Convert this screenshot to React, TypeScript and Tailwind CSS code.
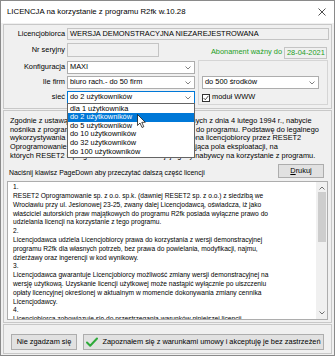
import React from 'react';

const Combo = ({ value, className = '', focused = false }: { value: string; className?: string; focused?: boolean }) => (
  <div
    className={`h-[13px] flex items-center bg-white border ${focused ? 'border-[#0078d7]' : 'border-[#adadad]'} ${className}`}
  >
    <span className="flex-1 pl-[2px] whitespace-nowrap overflow-hidden">{value}</span>
    <svg width="6" height="4" viewBox="0 0 6 4" className="mr-[3px]">
      <path d="M0.5 0.5 L3 3 L5.5 0.5" stroke="#606060" strokeWidth="0.8" fill="none" />
    </svg>
  </div>
);

const netOptions = [
  'dla 1 użytkownika',
  'do 2 użytkowników',
  'do 5 użytkowników',
  'do 10 użytkowników',
  'do 32 użytkowników',
  'do 100 użytkowników',
];

const introLines = [
  'Zgodnie z ustawą o prawie autorskim i prawach pokrewnych z dnia 4 lutego 1994 r., nabycie',
  'nośnika z programem nie jest nabyciem praw autorskich do programu. Podstawę do legalnego',
  'wykorzystywania programu stanowi tylko licencja udzielona licencjobiorcy przez RESET2',
  'Oprogramowanie sp. z o.o. w formie dokumentu, określająca pola eksploatacji, na',
  'których RESET2 Oprogramowanie udziela swojej zgody nabywcy na korzystanie z programu.',
];

const licenseLines = [
  '1.',
  'RESET2 Oprogramowanie sp. z o.o. sp.k. (dawniej RESET2 sp. z o.o.) z siedzibą we',
  'Wrocławiu przy ul. Jesionowej 23-25, zwany dalej Licencjodawcą, oświadcza, iż jako',
  'właściciel autorskich praw majątkowych do programu R2fk posiada wyłączne prawo do',
  'udzielania licencji na korzystanie z tego programu.',
  '2.',
  'Licencjodawca udziela Licencjobiorcy prawa do korzystania z wersji demonstracyjnej',
  'programu R2fk dla własnych potrzeb, bez prawa do powielania, modyfikacji, najmu,',
  'dzierżawy oraz ingerencji w kod wynikowy.',
  '3.',
  'Licencjodawca gwarantuje Licencjobiorcy możliwość zmiany wersji demonstracyjnej na',
  'wersję użytkową. Uzyskanie licencji użytkowej może nastąpić wyłącznie po uiszczeniu',
  'opłaty licencyjnej określonej w aktualnym w momencie dokonywania zmiany cennika',
  'Licencjodawcy.',
  '4.',
  'Licencjobiorca zobowiązuje się do przestrzegania warunków niniejszej licencji.',
];

export default function App() {
  return (
    <div className="w-[335px] h-[356px] bg-[#f0f0f0] border border-[#8a8a8a] flex flex-col text-black text-[7.4px] leading-[8.67px] font-['Liberation_Sans',Tahoma,sans-serif] overflow-hidden">
      {/* title bar */}
      <div className="h-[22px] bg-white flex items-center pl-[6px] pr-[8px] shrink-0">
        <span className="flex-1 text-[7.8px] whitespace-nowrap">
          LICENCJA na korzystanie z programu R2fk w.10.28
        </span>
        <svg width="8" height="8" viewBox="0 0 8 8">
          <path d="M0.5 0.5 L7.5 7.5 M7.5 0.5 L0.5 7.5" stroke="#222" strokeWidth="0.8" />
        </svg>
      </div>

      {/* top panel */}
      <div className="relative mx-[2px] mt-[1px] border border-[#c8c8c8] pt-[3px] pb-[3px] pr-[2px] flex flex-col gap-[3px] shrink-0">
        <div className="flex items-center h-[12px]">
          <span className="w-[63px] text-right pr-[2px]">Licencjobiorca</span>
          <div className="flex-1 h-[12px] bg-[#f0f0f0] border border-[#c4c4c4] flex items-center pl-[2px] whitespace-nowrap">
            WERSJA DEMONSTRACYJNA NIEZAREJESTROWANA
          </div>
        </div>
        <div className="flex items-center h-[14px]">
          <span className="w-[63px] text-right pr-[2px]">Nr seryjny</span>
          <div className="w-[92px] h-[14px] bg-[#f0f0f0] border border-[#c4c4c4]" />
          <span className="flex-1 text-right pr-[2px] text-[#1e9e1e] mt-[4px]">Abonament ważny do</span>
          <div className="w-[43px] h-[12px] mt-[6px] mr-[2px] bg-[#f0f0f0] border border-[#c4c4c4] flex items-center pl-[2px] text-[#1e9e1e]">
            28-04-2021
          </div>
        </div>
        <div className="flex">
          <div className="flex flex-col gap-[2px] pt-[1px]">
            <div className="flex items-center">
              <span className="w-[63px] text-right pr-[2px]">Konfiguracja</span>
              <Combo value="MAXI" className="w-[128px]" />
            </div>
            <div className="flex items-center">
              <span className="w-[63px] text-right pr-[2px]">Ile firm</span>
              <Combo value="biuro rach.- do 50 firm" className="w-[128px]" />
            </div>
            <div className="flex items-center">
              <span className="w-[63px] text-right pr-[2px]">sieć</span>
              <Combo value="do 2 użytkowników" className="w-[128px]" focused />
            </div>
          </div>
          <div className="flex-1 ml-[3px] mr-[1px] border border-[#d5d5d5] pt-[15px] pl-[3px] pr-[8px] flex flex-col gap-[2px]">
            <Combo value="do 500 środków" />
            <div className="flex items-center gap-[2px] h-[13px]">
              <div className="w-[8px] h-[8px] border border-[#333] bg-white flex items-center justify-center">
                <svg width="6" height="6" viewBox="0 0 6 6">
                  <path d="M0.6 3 L2.3 4.8 L5.4 0.8" stroke="#222" strokeWidth="0.8" fill="none" />
                </svg>
              </div>
              <span>moduł WWW</span>
            </div>
          </div>
        </div>

        {/* open dropdown */}
        <div className="absolute left-[63px] top-[78px] w-[128px] bg-white border border-[#646464] py-[0.5px] z-10">
          {netOptions.map((o, i) => (
            <div
              key={o}
              className={`h-[8.67px] pl-[2px] whitespace-nowrap ${i === 1 ? 'bg-[#0078d7] text-white' : ''}`}
            >
              {o}
            </div>
          ))}
          <svg width="10" height="15" viewBox="0 0 10 15" className="absolute left-[69px] top-[10px]">
            <path d="M0.5 0.5 L0.5 11.5 L3 9 L5 13.5 L6.8 12.7 L4.8 8.3 L8.3 8.3 Z" fill="white" stroke="black" strokeWidth="0.7" />
          </svg>
        </div>
      </div>

      {/* middle panel */}
      <div className="mx-[2px] mt-[1px] flex-1 border border-[#c8c8c8] pt-[6px] px-[3px] flex flex-col">
        <div className="pl-[3px]">
          {introLines.map((l, i) => (
            <div key={i} className="h-[8.67px] whitespace-nowrap">{l}</div>
          ))}
        </div>
        <div className="flex items-end mt-[4px] pr-[4px]">
          <span className="flex-1 pl-[2px] pb-[1px] text-[6.9px]">Naciśnij klawisz PageDown aby przeczytać dalszą część licencji</span>
          <button className="w-[46px] h-[14px] bg-[#e1e1e1] border border-[#adadad] flex items-center justify-center">
            <span><span className="underline">D</span>rukuj</span>
          </button>
        </div>
        <div className="mt-[3px] h-[139px] bg-white border border-[#adadad] flex overflow-hidden">
          <div className="flex-1 pl-[5px] pt-[1px] overflow-hidden text-[6.65px] leading-[8.8px]">
            {licenseLines.map((l, i) => (
              <div key={i} className="h-[8.8px] whitespace-nowrap">{l}</div>
            ))}
          </div>
          <div className="w-[11px] bg-[#f0f0f0] flex flex-col items-center">
            <svg width="6" height="4" viewBox="0 0 6 4" className="mt-[4px]">
              <path d="M0.5 3.5 L3 1 L5.5 3.5" stroke="#606060" strokeWidth="0.9" fill="none" />
            </svg>
            <div className="w-[8px] h-[50px] mt-[2px] bg-[#cdcdcd]" />
            <div className="flex-1" />
            <svg width="6" height="4" viewBox="0 0 6 4" className="mb-[4px]">
              <path d="M0.5 0.5 L3 3 L5.5 0.5" stroke="#606060" strokeWidth="0.9" fill="none" />
            </svg>
          </div>
        </div>
      </div>

      {/* bottom panel */}
      <div className="mx-[2px] mt-[1px] mb-[1px] h-[30px] border border-[#c8c8c8] flex items-end pb-[3px] px-[7px] gap-[6px] shrink-0">
        <button className="w-[66px] h-[16px] bg-[#e1e1e1] border border-[#adadad] flex items-center justify-center">
          Nie zgadzam się
        </button>
        <button className="flex-1 h-[16px] bg-[#e1e1e1] border border-[#adadad] flex items-center justify-center gap-[4px]">
          <svg width="12" height="10" viewBox="0 0 12 10">
            <path d="M1 5.5 L4.2 8.7 L11 1.5" stroke="#2eaa3a" strokeWidth="2" fill="none" strokeLinecap="round" strokeLinejoin="round" />
          </svg>
          <span>Zapoznałem się z warunkami umowy i akceptuję je bez zastrzeżeń</span>
        </button>
      </div>
    </div>
  );
}
